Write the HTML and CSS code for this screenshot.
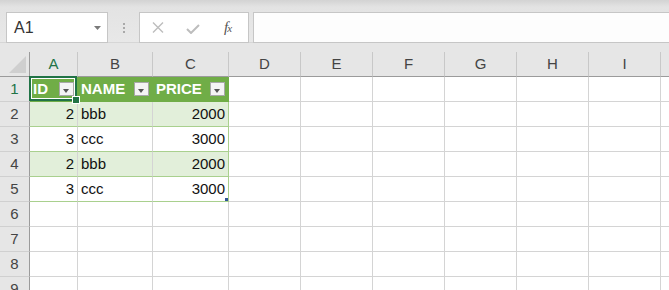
FILE: index.html
```html
<!DOCTYPE html>
<html lang="ja">
<head>
    <meta charset="UTF-8">
    <title>Book1 - Excel</title>
    <link rel="stylesheet" href="styles.css">
</head>
<body>

    <div class="toolbar">
        <div class="namebox">
            <span>A1</span>
            <svg class="caret" width="7" height="4" viewBox="0 0 7 4"><polygon points="0,0 7,0 3.5,4" fill="#7a7a7a"/></svg>
        </div>
        <div class="grip"><i></i><i></i><i></i></div>
        <div class="fx-buttons">
            <svg class="fx-icon" width="12" height="11" viewBox="0 0 12 11"><path d="M1 0.5 L11 10.5 M11 0.5 L1 10.5" stroke="#bdbdbd" stroke-width="1.4" fill="none"/></svg>
            <svg class="fx-icon" width="14" height="10" viewBox="0 0 14 10"><path d="M1 5 L5 9 L13 1" stroke="#bdbdbd" stroke-width="2" fill="none"/></svg>
            <span class="fx-label">f<small>x</small></span>
        </div>
        <div class="formula"></div>
    </div>

    <div class="strip"></div>

    <div class="sheet">
        <!-- column headers -->
        <div class="c corner">
            <svg width="30" height="24" viewBox="0 0 30 24"><polygon points="26,4 26,21 9,21" fill="#cfcfcf"/></svg>
        </div>
        <div class="c hd on">A</div>
        <div class="c hd">B</div>
        <div class="c hd">C</div>
        <div class="c hd">D</div>
        <div class="c hd">E</div>
        <div class="c hd">F</div>
        <div class="c hd">G</div>
        <div class="c hd">H</div>
        <div class="c hd">I</div>
        <div class="c hd"></div>

        <!-- row 1: table header -->
        <div class="c rh on">1</div>
        <div class="c th sel">ID<span class="flt"></span><span class="sel-box"><b></b></span></div>
        <div class="c th">NAME<span class="flt"></span></div>
        <div class="c th last">PRICE<span class="flt"></span></div>
        <div class="c"></div><div class="c"></div><div class="c"></div><div class="c"></div><div class="c"></div><div class="c"></div><div class="c"></div>

        <!-- row 2 -->
        <div class="c rh">2</div>
        <div class="c td band num">2</div>
        <div class="c td band">bbb</div>
        <div class="c td band num last">2000</div>
        <div class="c"></div><div class="c"></div><div class="c"></div><div class="c"></div><div class="c"></div><div class="c"></div><div class="c"></div>

        <!-- row 3 -->
        <div class="c rh">3</div>
        <div class="c td num">3</div>
        <div class="c td">ccc</div>
        <div class="c td num last">3000</div>
        <div class="c"></div><div class="c"></div><div class="c"></div><div class="c"></div><div class="c"></div><div class="c"></div><div class="c"></div>

        <!-- row 4 -->
        <div class="c rh">4</div>
        <div class="c td band num">2</div>
        <div class="c td band">bbb</div>
        <div class="c td band num last">2000</div>
        <div class="c"></div><div class="c"></div><div class="c"></div><div class="c"></div><div class="c"></div><div class="c"></div><div class="c"></div>

        <!-- row 5 -->
        <div class="c rh">5</div>
        <div class="c td num">3</div>
        <div class="c td">ccc</div>
        <div class="c td num last end">3000</div>
        <div class="c"></div><div class="c"></div><div class="c"></div><div class="c"></div><div class="c"></div><div class="c"></div><div class="c"></div>

        <!-- empty rows -->
        <div class="c rh">6</div>
        <div class="c"></div><div class="c"></div><div class="c"></div><div class="c"></div><div class="c"></div><div class="c"></div><div class="c"></div><div class="c"></div><div class="c"></div><div class="c"></div>
        <div class="c rh">7</div>
        <div class="c"></div><div class="c"></div><div class="c"></div><div class="c"></div><div class="c"></div><div class="c"></div><div class="c"></div><div class="c"></div><div class="c"></div><div class="c"></div>
        <div class="c rh">8</div>
        <div class="c"></div><div class="c"></div><div class="c"></div><div class="c"></div><div class="c"></div><div class="c"></div><div class="c"></div><div class="c"></div><div class="c"></div><div class="c"></div>
        <div class="c rh">9</div>
        <div class="c"></div><div class="c"></div><div class="c"></div><div class="c"></div><div class="c"></div><div class="c"></div><div class="c"></div><div class="c"></div><div class="c"></div><div class="c"></div>
    </div>

</body>
</html>
```

FILE: styles.css
```css
body { margin: 0; background: #e6e6e6; overflow: hidden; font-family: "Liberation Sans", Arial, sans-serif; }

/* formula bar area */
.toolbar { display: flex; align-items: flex-start; height: 43px; box-sizing: border-box; padding: 12px 0 0 6px; background: linear-gradient(#d3d3d3 0, #e3e3e3 7px, #e8e8e8 100%); border-bottom: 1px solid #d6d6d6; }
.namebox { width: 102px; height: 31px; box-sizing: border-box; background: #fff; border: 1px solid #c6c6c6; display: flex; align-items: center; justify-content: space-between; padding: 0 6px 0 7px; font-size: 16px; color: #333; }
.namebox .caret { margin-top: 1px; }
.grip { width: 31px; height: 31px; display: flex; flex-direction: column; align-items: center; justify-content: center; gap: 2px; }
.grip i { display: block; width: 2px; height: 2px; background: #a9a9a9; }
.fx-buttons { width: 110px; height: 31px; box-sizing: border-box; background: #fff; border: 1px solid #c6c6c6; display: flex; align-items: center; padding: 0 0 0 12px; margin-right: 4px; }
.fx-buttons .fx-icon { margin-right: 22px; }
.fx-buttons .fx-icon + .fx-icon { margin-right: 24px; margin-top: 2px; }
.fx-label { font-family: "Liberation Serif", "Times New Roman", serif; font-style: italic; font-size: 15px; color: #555; letter-spacing: -1px; }
.fx-label small { font-size: 11px; }
.formula { flex: 1; height: 31px; box-sizing: border-box; background: #fdfdfd; border: 1px solid #c6c6c6; border-right: none; }

.strip { height: 9px; background: #e6e6e6; }

/* grid */
.sheet { display: grid; grid-template-columns: 30px 48px 75px 76px repeat(7, 72px); grid-auto-rows: 25px; width: max-content; background: #fff; }
.c { box-sizing: border-box; border-right: 1px solid #d4d4d4; border-bottom: 1px solid #d4d4d4; background: #fff; font-size: 15px; line-height: 24px; padding: 0 3px; white-space: nowrap; overflow: hidden; color: #111; }
.num { text-align: right; }

.corner { background: #e6e6e6; border-right-color: #9b9b9b; border-bottom-color: #9b9b9b; padding: 0; }
.corner svg { display: block; }
.hd { background: #e6e6e6; border-right-color: #c8c8c8; border-bottom-color: #9b9b9b; text-align: center; color: #444; font-size: 15px; }
.rh { background: #e6e6e6; border-right-color: #9b9b9b; border-bottom-color: #d0d0d0; text-align: center; color: #444; font-size: 15px; padding: 0; }
.on { color: #217346; }

/* table */
.th { position: relative; overflow: visible; background: #70ad47; color: #fff; font-weight: bold; border-right-color: #70ad47; border-bottom-color: #70ad47; }
.td { border-bottom-color: #a9d08e; }
.td.last { border-right-color: #a9d08e; }
.band { background: #e2efda; }
.flt { position: absolute; right: 3px; top: 5px; width: 15px; height: 14px; box-sizing: border-box; background: #f4f4f4; border: 1px solid #a8a8a8; }
.flt::after { content: ""; position: absolute; left: 3px; top: 6px; border-left: 3.5px solid transparent; border-right: 3.5px solid transparent; border-top: 4px solid #555; }

.sel-box { position: absolute; left: -1px; top: -1px; right: 0; bottom: 0; border: 2px solid #217346; box-shadow: inset 0 0 0 1px #fff; z-index: 2; }
.sel-box b { position: absolute; right: -5px; bottom: -5px; width: 6px; height: 6px; background: #217346; border: 1px solid #fff; }

.end { position: relative; overflow: visible; }
.end::after { content: ""; position: absolute; right: 0; bottom: 0; width: 3px; height: 3px; background: #2f5597; }
```
